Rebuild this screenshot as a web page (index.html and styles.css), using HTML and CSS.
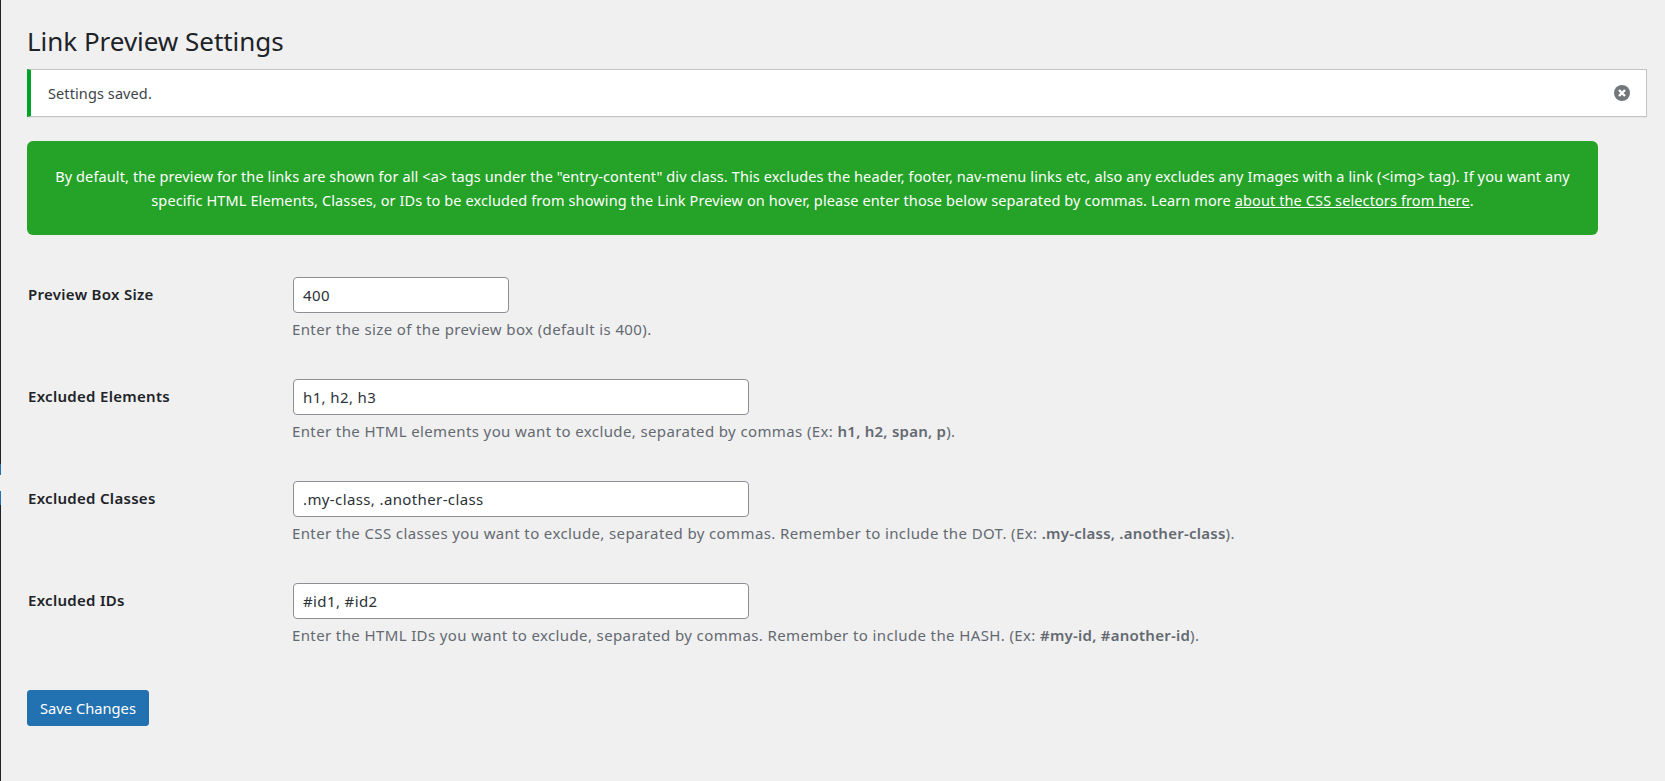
FILE: index.html
```html
<!DOCTYPE html>
<html lang="en">
<head>
<meta charset="utf-8">
<title>Link Preview Settings</title>
<link rel="stylesheet" href="styles.css">
</head>
<body>
<div class="edge"><span class="edge-mark"></span><span class="edge-gap"></span><span class="edge-mark-lower"></span></div>
<main class="wrap">
  <h1 class="title">Link Preview Settings</h1>
  <div class="notice">
    <p>Settings saved.</p>
    <svg class="dismiss" width="16" height="16" viewBox="0 0 16 16" aria-hidden="true"><circle cx="8" cy="8" r="8" fill="#72777c"/><path d="M5 5l6 6M11 5l-6 6" stroke="#fff" stroke-width="2.4" stroke-linecap="butt"/></svg>
  </div>
  <div class="intro">By default, the preview for the links are shown for all &lt;a&gt; tags under the "entry-content" div class. This excludes the header, footer, nav-menu links etc, also any excludes any Images with a link (&lt;img&gt; tag). If you want any specific HTML Elements, Classes, or IDs to be excluded from showing the Link Preview on hover, please enter those below separated by commas. Learn more <a href="#">about the CSS selectors from here</a>.</div>
  <form class="form">
    <div class="row">
      <label class="label">Preview Box Size</label>
      <div class="field">
        <input class="input input-small" type="text" value="400">
        <p class="desc">Enter the size of the preview box (default is 400).</p>
      </div>
    </div>
    <div class="row">
      <label class="label">Excluded Elements</label>
      <div class="field">
        <input class="input" type="text" value="h1, h2, h3">
        <p class="desc">Enter the HTML elements you want to exclude, separated by commas (Ex: <b>h1, h2, span, p</b>).</p>
      </div>
    </div>
    <div class="row">
      <label class="label">Excluded Classes</label>
      <div class="field">
        <input class="input" type="text" value=".my-class, .another-class">
        <p class="desc">Enter the CSS classes you want to exclude, separated by commas. Remember to include the DOT. (Ex: <b>.my-class, .another-class</b>).</p>
      </div>
    </div>
    <div class="row">
      <label class="label">Excluded IDs</label>
      <div class="field">
        <input class="input" type="text" value="#id1, #id2">
        <p class="desc">Enter the HTML IDs you want to exclude, separated by commas. Remember to include the HASH. (Ex: <b>#my-id, #another-id</b>).</p>
      </div>
    </div>
    <button class="save" type="button">Save Changes</button>
  </form>
</main>
</body>
</html>
```
FILE: styles.css
```css
* { box-sizing: border-box; }
html, body { height: 100%; }
body {
  margin: 0;
  background: #f0f0f1;
  color: #3c434a;
  font-family: "Noto Sans", "Open Sans", sans-serif;
  font-size: 15px;
  letter-spacing: 0.3px;
  line-height: 20px;
  overflow: hidden;
  display: flex;
}
.edge { width: 1px; background: #1d2327; flex: none; position: relative; }
.edge-mark { position: absolute; left: 0; top: 464px; width: 1px; height: 11px; background: #2271b1; }
.edge-gap { position: absolute; left: 0; top: 475px; width: 1px; height: 16px; background: #f0f0f1; }
.edge-mark-lower { position: absolute; left: 0; top: 491px; width: 1px; height: 14px; background: #2271b1; }
.wrap { flex: 1; padding: 0 18px 0 26px; min-width: 0; }
.title { margin: 0; padding: 25px 0 12px; font-size: 26px; line-height: 32px; font-weight: 400; letter-spacing: -0.03px; color: #1d2327; }
.notice {
  height: 48px; background: #fff;
  border: 1px solid #c3c4c7; border-left: 4px solid #00a32a;
  box-shadow: 0 1px 1px rgba(0,0,0,.04);
  display: flex; align-items: center; justify-content: space-between;
  padding: 0 16px 0 17px;
}
.notice p { margin: 0; font-size: 14.5px; letter-spacing: 0.1px; }
.dismiss { flex: none; }
.intro {
  margin-top: 24px; width: 1571px; height: 94px;
  background: #25a228; color: #fff; border-radius: 6px;
  padding: 23px 20px; text-align: center; line-height: 24px;
  font-size: 14.5px; letter-spacing: 0.11px;
}
.intro a { color: #fff; text-decoration: underline; }
.form { margin-top: 42px; }
.row { display: flex; height: 102px; }
.label { width: 266px; padding: 7px 0 0 1px; font-weight: 600; color: #1d2327; flex: none; }
.field { flex: 1; min-width: 0; }
.input {
  display: block; width: 456px; height: 36px;
  border: 1px solid #8c8f94; border-radius: 4px; background: #fff;
  padding: 0 9px; color: #2c3338;
  font: 400 15px/20px "Noto Sans", "Open Sans", sans-serif;
  letter-spacing: 0.38px;
}
.input-small { width: 216px; }
.desc { margin: 6px 0 0 -1px; color: #646970; line-height: 21px; letter-spacing: 0.38px; }
.desc b { font-weight: 600; letter-spacing: 0.24px; }
.save {
  display: block; margin-top: 5px; width: 122px; height: 36px;
  background: #2271b1; border: 1px solid #2271b1; border-radius: 3px;
  color: #fff; padding: 0;
  font: 400 14.7px/20px "Noto Sans", "Open Sans", sans-serif;
}
```
